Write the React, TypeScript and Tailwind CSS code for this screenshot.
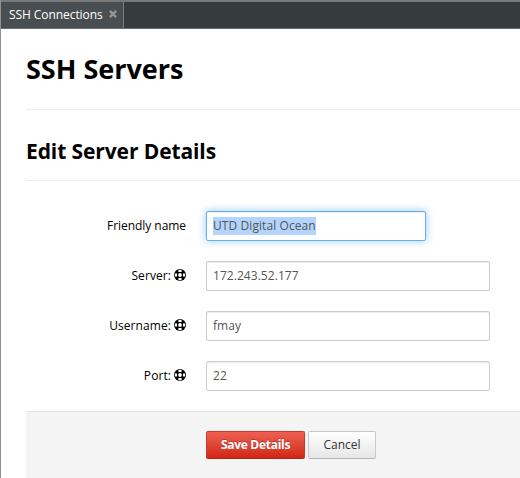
import React from "react";

function HelpIcon() {
  return (
    <svg width="12" height="12" viewBox="0 0 12 12" className="relative -top-px ml-[3px] shrink-0" fill="none">
      <circle cx="6" cy="6" r="6" fill="#000" />
      <path d="M4.4 1Q6 .6 7.6 1V3.1Q6 2.7 4.4 3.1ZM4.4 11Q6 11.4 7.6 11V8.9Q6 9.3 4.4 8.9ZM1 4.4Q.6 6 1 7.6H3.1Q2.7 6 3.1 4.4ZM11 4.4Q11.4 6 11 7.6H8.9Q9.3 6 8.9 4.4Z" fill="#fff" />
      <circle cx="6" cy="6" r="1.9" fill="#fff" />
    </svg>
  );
}

function Row({ label, value, help = true, focused = false }: { label: string; value: string; help?: boolean; focused?: boolean }) {
  return (
    <div className="flex h-[30px] items-center">
      <div className="flex w-40 items-center justify-end text-[12px] leading-5 text-black">
        <span className={focused ? "tracking-[-0.05px]" : "tracking-[0.08px]"}>{label}</span>
        {help && <HelpIcon />}
      </div>
      <div
        className={
          focused
            ? "ml-5 flex h-[30px] w-[220px] items-center rounded-[2px] border border-[#66afe9] bg-white px-1.5 text-[12px] text-[#555] shadow-[inset_0_1px_1px_rgba(0,0,0,0.075),0_0_8px_rgba(82,168,236,0.6)]"
            : "ml-5 flex h-[30px] w-[284px] items-center rounded-[2px] border border-[#ccc] bg-white px-1.5 text-[12px] text-[#555] shadow-[inset_0_1px_1px_rgba(0,0,0,0.075)]"
        }
      >
        <span className={focused ? "bg-[#b3d4fd] leading-[18px] tracking-[0.08px]" : "leading-[18px] tracking-[0.05px]"}>{value}</span>
      </div>
    </div>
  );
}

export default function App() {
  return (
    <div className="flex h-[478px] w-[520px] flex-col overflow-hidden border-l border-[#929292] bg-white font-['Open_Sans','Noto_Sans',sans-serif]">
      <div className="flex h-[29px] shrink-0 border-b border-t-2 border-b-[#696c6f] border-t-[#77797b] bg-[#363b3e]">
        <div className="flex h-[26px] w-[123px] items-center border-r border-[#777b7e] bg-[#484e51] pl-2 text-[12px] text-white">
          <span className="tracking-[-0.07px]">SSH Connections</span>
          <svg width="8" height="8" viewBox="0 0 8 8" className="relative -top-px ml-1.5" stroke="#929596" strokeWidth="2.5">
            <path d="M.9 .9L7.1 7.1M7.1 .9L.9 7.1" />
          </svg>
        </div>
      </div>
      <div className="ml-[25px] flex grow flex-col">
        <h1 className="flex h-[81px] items-center border-b border-[#eee] text-[27px] font-bold leading-10 text-black">SSH Servers</h1>
        <h2 className="flex h-[71px] items-center border-b border-[#eee] pt-3 text-[21px] font-bold leading-10 tracking-[-0.1px] text-black">Edit Server Details</h2>
        <div className="mt-[30px] flex flex-col gap-5">
          <Row label="Friendly name" value="UTD Digital Ocean" help={false} focused />
          <Row label="Server:" value="172.243.52.177" />
          <Row label="Username:" value="fmay" />
          <Row label="Port:" value="22" />
        </div>
        <div className="mt-5 flex grow items-start gap-[3px] border-t border-[#e5e5e5] bg-[#f4f4f4] pl-[180px] pt-[19px]">
          <button className="h-7 w-[99px] rounded-[2px] border border-[#c83a2b] border-b-[#b0281a] bg-linear-to-b from-[#ee5f50] to-[#d02412] text-[12px] font-bold tracking-[-0.28px] text-white [text-shadow:0_-1px_0_rgba(0,0,0,0.25)]">Save Details</button>
          <button className="h-7 w-[68px] rounded-[2px] border border-[#c8c8c8] border-b-[#b3b3b3] bg-linear-to-b from-white to-[#e6e6e6] text-[12px] text-[#333]">Cancel</button>
        </div>
      </div>
    </div>
  );
}
